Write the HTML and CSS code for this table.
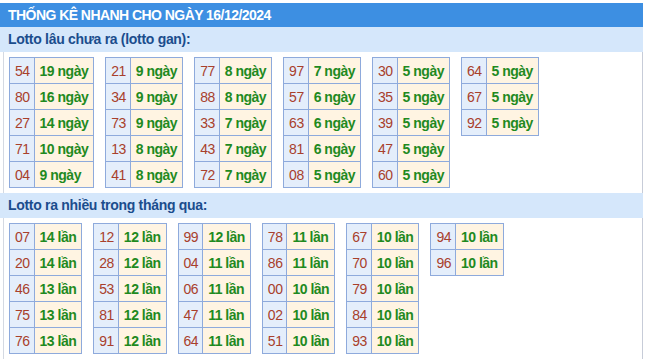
FILE: index.html
```html
<!DOCTYPE html>
<html lang="vi">
<head>
<meta charset="utf-8">
<title>Thống kê nhanh</title>
<link rel="stylesheet" href="styles.css">
</head>
<body>
<div class="wrap">
  <div class="head">THỐNG KÊ NHANH CHO NGÀY 16/12/2024</div>
  <div class="sub">Lotto lâu chưa ra (lotto gan):</div>
  <div class="body">
    <table class="t"><tr><td class="n">54</td><td class="v">19 ngày</td></tr><tr><td class="n">80</td><td class="v">16 ngày</td></tr><tr><td class="n">27</td><td class="v">14 ngày</td></tr><tr><td class="n">71</td><td class="v">10 ngày</td></tr><tr><td class="n">04</td><td class="v">9 ngày</td></tr></table>
    <table class="t"><tr><td class="n">21</td><td class="v">9 ngày</td></tr><tr><td class="n">34</td><td class="v">9 ngày</td></tr><tr><td class="n">73</td><td class="v">9 ngày</td></tr><tr><td class="n">13</td><td class="v">8 ngày</td></tr><tr><td class="n">41</td><td class="v">8 ngày</td></tr></table>
    <table class="t"><tr><td class="n">77</td><td class="v">8 ngày</td></tr><tr><td class="n">88</td><td class="v">8 ngày</td></tr><tr><td class="n">33</td><td class="v">7 ngày</td></tr><tr><td class="n">43</td><td class="v">7 ngày</td></tr><tr><td class="n">72</td><td class="v">7 ngày</td></tr></table>
    <table class="t"><tr><td class="n">97</td><td class="v">7 ngày</td></tr><tr><td class="n">57</td><td class="v">6 ngày</td></tr><tr><td class="n">63</td><td class="v">6 ngày</td></tr><tr><td class="n">81</td><td class="v">6 ngày</td></tr><tr><td class="n">08</td><td class="v">5 ngày</td></tr></table>
    <table class="t"><tr><td class="n">30</td><td class="v">5 ngày</td></tr><tr><td class="n">35</td><td class="v">5 ngày</td></tr><tr><td class="n">39</td><td class="v">5 ngày</td></tr><tr><td class="n">47</td><td class="v">5 ngày</td></tr><tr><td class="n">60</td><td class="v">5 ngày</td></tr></table>
    <table class="t"><tr><td class="n">64</td><td class="v">5 ngày</td></tr><tr><td class="n">67</td><td class="v">5 ngày</td></tr><tr><td class="n">92</td><td class="v">5 ngày</td></tr></table>
  </div>
  <div class="sub">Lotto ra nhiều trong tháng qua:</div>
  <div class="body">
    <table class="t"><tr><td class="n">07</td><td class="v">14 lần</td></tr><tr><td class="n">20</td><td class="v">14 lần</td></tr><tr><td class="n">46</td><td class="v">13 lần</td></tr><tr><td class="n">75</td><td class="v">13 lần</td></tr><tr><td class="n">76</td><td class="v">13 lần</td></tr></table>
    <table class="t"><tr><td class="n">12</td><td class="v">12 lần</td></tr><tr><td class="n">28</td><td class="v">12 lần</td></tr><tr><td class="n">53</td><td class="v">12 lần</td></tr><tr><td class="n">81</td><td class="v">12 lần</td></tr><tr><td class="n">91</td><td class="v">12 lần</td></tr></table>
    <table class="t"><tr><td class="n">99</td><td class="v">12 lần</td></tr><tr><td class="n">04</td><td class="v">11 lần</td></tr><tr><td class="n">06</td><td class="v">11 lần</td></tr><tr><td class="n">47</td><td class="v">11 lần</td></tr><tr><td class="n">64</td><td class="v">11 lần</td></tr></table>
    <table class="t"><tr><td class="n">78</td><td class="v">11 lần</td></tr><tr><td class="n">86</td><td class="v">11 lần</td></tr><tr><td class="n">00</td><td class="v">10 lần</td></tr><tr><td class="n">02</td><td class="v">10 lần</td></tr><tr><td class="n">51</td><td class="v">10 lần</td></tr></table>
    <table class="t"><tr><td class="n">67</td><td class="v">10 lần</td></tr><tr><td class="n">70</td><td class="v">10 lần</td></tr><tr><td class="n">79</td><td class="v">10 lần</td></tr><tr><td class="n">84</td><td class="v">10 lần</td></tr><tr><td class="n">93</td><td class="v">10 lần</td></tr></table>
    <table class="t"><tr><td class="n">94</td><td class="v">10 lần</td></tr><tr><td class="n">96</td><td class="v">10 lần</td></tr></table>
  </div>
</div>
</body>
</html>
```

FILE: styles.css
```css
html, body {
  margin: 0;
  padding: 0;
  background: #ffffff;
}
body {
  font-family: "Liberation Sans", Arial, sans-serif;
  font-size: 14px;
}
.wrap {
  width: 643px;
  margin-top: 3px;
}
.head {
  height: 24px;
  line-height: 24px;
  background: #3d8fe2;
  color: #ffffff;
  font-weight: bold;
  font-size: 14px;
  letter-spacing: -0.55px;
  padding-left: 8px;
}
.sub {
  height: 25px;
  line-height: 25px;
  background: #d5e7fb;
  color: #1b4d8d;
  font-weight: bold;
  font-size: 14px;
  letter-spacing: -0.3px;
  padding-left: 8px;
}
.body {
  margin-left: 3px;
  border-left: 1px solid #d4d9e2;
  border-right: 1px solid #c7ccd8;
  padding: 5px 0 5px 5px;
  display: flex;
  align-items: flex-start;
  gap: 11px;
}
.t {
  border-collapse: collapse;
  border: 1px solid #8eaadc;
}
.t td {
  border: 1px solid #8eaadc;
  height: 25px;
  padding: 0 5px;
  box-sizing: content-box;
  white-space: nowrap;
  font-size: 14px;
  letter-spacing: -0.5px;
}
.t .n {
  background: #e4eefb;
  color: #a8402c;
  text-align: center;
  padding: 0 4px 0 5px;
}
.t .v {
  background: #fff4e2;
  color: #1f8a1f;
  font-weight: bold;
}
```
